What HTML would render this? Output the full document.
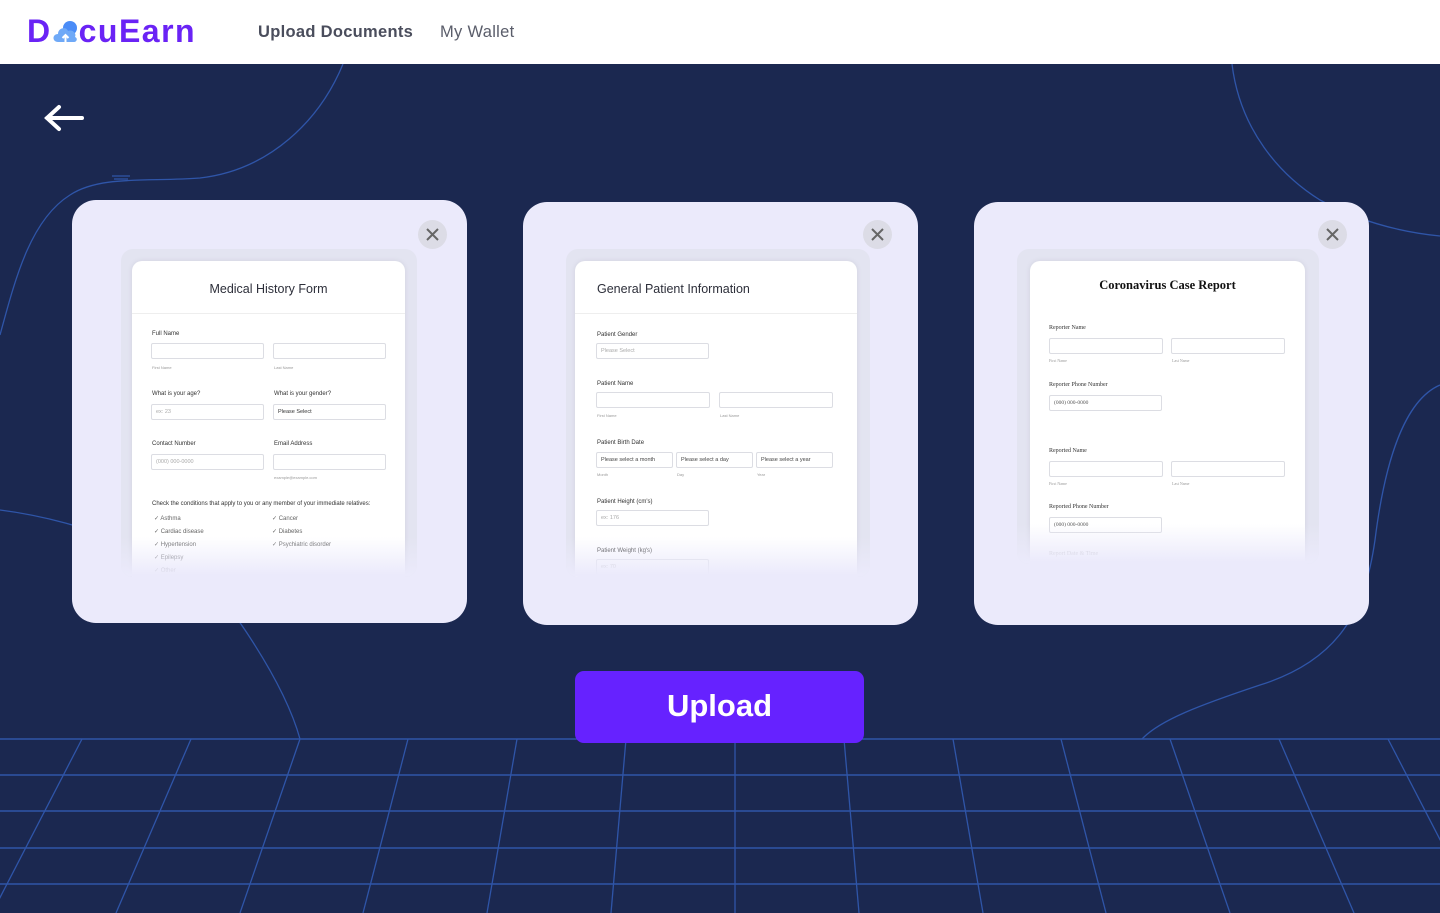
<!DOCTYPE html>
<html><head><meta charset="utf-8">
<style>
*{margin:0;padding:0;box-sizing:border-box}
body{width:1440px;height:913px;overflow:hidden;background:#1b2850;font-family:"Liberation Sans",sans-serif;position:relative}
.nav{position:absolute;left:0;top:0;width:1440px;height:64px;background:#fff}
.logo{position:absolute;left:27px;top:13px;font-size:32px;font-weight:bold;color:#6a23f5;letter-spacing:1.5px}
.n1{position:absolute;left:258px;top:23px;font-size:16.5px;font-weight:bold;color:#4a4d5c;letter-spacing:0.3px}
.n2{position:absolute;left:440px;top:23px;font-size:16.5px;color:#5a5d6a;letter-spacing:0.3px}
svg.bg{position:absolute;left:0;top:0}
.card{position:absolute;width:395px;height:423px;background:#ebeafb;border-radius:24px}
.x{position:absolute;width:29px;height:29px;border-radius:50%;background:#dcdce6;top:20px;right:20px}
.prev{position:absolute;left:49px;top:49px;width:296px;height:328px;background:#e3e4f1;border-radius:12px;overflow:hidden}
.form{position:absolute;left:11px;top:12px;width:273px;height:330px;background:#fff;border-radius:10px;box-shadow:0 0 6px rgba(0,0,0,.08);font-size:6px;color:#333}
.form .h{height:53px;border-bottom:1px solid #eee;font-size:12.5px;color:#2d2f3a;padding-top:21px}
.fade{position:absolute;left:0;bottom:0;width:100%;height:40px;background:linear-gradient(rgba(235,234,251,0),#ebeafb 95%)}
.in{position:absolute;height:16px;border:1px solid #dcdde3;border-radius:2px;color:#aaa;font-size:5.5px;padding:4px 4px}
.sm{position:absolute;font-size:4px;color:#999}
.lb{position:absolute;font-size:6px;color:#333}
.btn{position:absolute;left:575px;top:671px;width:289px;height:72px;background:#6622ff;border-radius:9px;color:#fff;font-weight:bold;font-size:31px;text-align:center;line-height:70px}
.serif{font-family:"Liberation Serif",serif}
</style></head><body>
<svg class="bg" width="1440" height="913" viewBox="0 0 1440 913">
<g fill="none" stroke="#2f55a8" stroke-width="1.3">
<path d="M343 64 C320 120 270 170 200 178 C150 182 100 175 70 195 C30 220 15 280 0 335"/>
<path d="M112 176 L130 176 M114 179 L128 179"/>
<path d="M0 510 C80 520 200 560 245 630 C275 675 292 710 300 739"/>
<path d="M1232 64 C1240 130 1280 175 1320 200 C1360 222 1400 232 1440 236"/>
<path d="M1440 385 C1405 400 1385 460 1375 540 C1365 610 1340 660 1260 685 C1200 705 1160 720 1142 739"/>
</g>
<g stroke="#2f55a8" stroke-width="1.5">
<line x1="0" y1="739" x2="1440" y2="739"/>
<line x1="0" y1="775" x2="1440" y2="775"/>
<line x1="0" y1="811" x2="1440" y2="811"/>
<line x1="0" y1="848" x2="1440" y2="848"/>
<line x1="0" y1="884" x2="1440" y2="884"/>
</g>
<g stroke="#2f55a8" stroke-width="1.3">
<line x1="-27" y1="739" x2="-132" y2="913"/>
<line x1="82" y1="739" x2="-8" y2="913"/>
<line x1="191" y1="739" x2="116" y2="913"/>
<line x1="300" y1="739" x2="240" y2="913"/>
<line x1="408" y1="739" x2="363" y2="913"/>
<line x1="517" y1="739" x2="487" y2="913"/>
<line x1="626" y1="739" x2="611" y2="913"/>
<line x1="735" y1="739" x2="735" y2="913"/>
<line x1="844" y1="739" x2="859" y2="913"/>
<line x1="953" y1="739" x2="983" y2="913"/>
<line x1="1061" y1="739" x2="1106" y2="913"/>
<line x1="1170" y1="739" x2="1230" y2="913"/>
<line x1="1279" y1="739" x2="1354" y2="913"/>
<line x1="1388" y1="739" x2="1478" y2="913"/>
</g>
<g stroke="#fff" stroke-width="4" stroke-linecap="round" fill="none">
<path d="M47 118 H82 M59 107 L47 118 L59 129"/>
</g>
</svg>
<div class="nav">
<div class="logo">D<span style="display:inline-block;width:27px;height:24px;position:relative;vertical-align:-2px"><svg width="27" height="24" viewBox="0 0 27 24" style="position:absolute;left:0;top:0"><circle cx="18" cy="8" r="7" fill="#4a8cf7"/><path d="M6 22 C0 22 0 14 6 14 C6 8 14 6 16 11 C20 9 25 13 23 17 C26 18 25 22 22 22 Z" fill="#6fa9f7"/><path d="M13.5 22 V15 M10.5 18 L13.5 15 L16.5 18" stroke="#fff" stroke-width="2" fill="none"/></svg></span>cuEarn</div>
<div class="n1">Upload Documents</div>
<div class="n2">My Wallet</div>
</div>

<!-- card 1 -->
<div class="card" style="left:72px;top:200px">
<div class="x"><svg width="29" height="29"><path d="M9 9 L20 20 M20 9 L9 20" stroke="#666" stroke-width="2"/></svg></div>
<div class="prev"><div class="form">
<div class="h" style="text-align:center">Medical History Form</div>
<div class="lb" style="left:20px;top:70px">Full Name</div>
<div class="in" style="left:19px;top:82px;width:113px"></div><div class="in" style="left:141px;top:82px;width:113px"></div>
<div class="sm" style="left:20px;top:104px">First Name</div><div class="sm" style="left:142px;top:104px">Last Name</div>
<div class="lb" style="left:20px;top:130px">What is your age?</div><div class="lb" style="left:142px;top:130px">What is your gender?</div>
<div class="in" style="left:19px;top:143px;width:113px">ex: 23</div><div class="in" style="left:141px;top:143px;width:113px;color:#333">Please Select</div>
<div class="lb" style="left:20px;top:180px">Contact Number</div><div class="lb" style="left:142px;top:180px">Email Address</div>
<div class="in" style="left:19px;top:193px;width:113px">(000) 000-0000</div><div class="in" style="left:141px;top:193px;width:113px"></div>
<div class="sm" style="left:142px;top:214px">example@example.com</div>
<div class="lb" style="left:20px;top:240px">Check the conditions that apply to you or any member of your immediate relatives:</div>
<div class="lb" style="left:22px;top:254px;color:#666">✓ Asthma<br><br>✓ Cardiac disease<br><br>✓ Hypertension<br><br>✓ Epilepsy<br><br>✓ Other</div>
<div class="lb" style="left:140px;top:254px;color:#666">✓ Cancer<br><br>✓ Diabetes<br><br>✓ Psychiatric disorder</div>
</div><div class="fade"></div></div>
</div>

<!-- card 2 -->
<div class="card" style="left:523px;top:202px">
<div class="x" style="top:18px;right:26px"><svg width="29" height="29"><path d="M9 9 L20 20 M20 9 L9 20" stroke="#666" stroke-width="2"/></svg></div>
<div class="prev" style="left:43px;top:47px;width:304px"><div class="form" style="left:9px;width:282px">
<div class="h" style="padding-left:22px">General Patient Information</div>
<div class="lb" style="left:22px;top:71px">Patient Gender</div>
<div class="in" style="left:21px;top:82px;width:113px">Please Select</div>
<div class="lb" style="left:22px;top:120px">Patient Name</div>
<div class="in" style="left:21px;top:131px;width:114px"></div><div class="in" style="left:144px;top:131px;width:114px"></div>
<div class="sm" style="left:22px;top:152px">First Name</div><div class="sm" style="left:145px;top:152px">Last Name</div>
<div class="lb" style="left:22px;top:179px">Patient Birth Date</div>
<div class="in" style="left:21px;top:191px;width:77px;color:#444">Please select a month</div><div class="in" style="left:101px;top:191px;width:77px;color:#444">Please select a day</div><div class="in" style="left:181px;top:191px;width:77px;color:#444">Please select a year</div>
<div class="sm" style="left:22px;top:211px">Month</div><div class="sm" style="left:102px;top:211px">Day</div><div class="sm" style="left:182px;top:211px">Year</div>
<div class="lb" style="left:22px;top:238px">Patient Height (cm's)</div>
<div class="in" style="left:21px;top:249px;width:113px">ex: 176</div>
<div class="lb" style="left:22px;top:287px">Patient Weight (kg's)</div>
<div class="in" style="left:21px;top:298px;width:113px">ex: 70</div>
</div><div class="fade"></div></div>
</div>

<!-- card 3 -->
<div class="card" style="left:974px;top:202px">
<div class="x" style="top:18px;right:22px"><svg width="29" height="29"><path d="M9 9 L20 20 M20 9 L9 20" stroke="#666" stroke-width="2"/></svg></div>
<div class="prev serif" style="left:43px;top:47px;width:302px;height:315px"><div class="form" style="left:13px;width:275px">
<div class="h" style="text-align:center;font-weight:bold;font-size:12.5px;color:#111;padding-top:17px;border:none">Coronavirus Case Report</div>
<div class="lb" style="left:19px;top:64px">Reporter Name</div>
<div class="in" style="left:19px;top:77px;width:114px"></div><div class="in" style="left:141px;top:77px;width:114px"></div>
<div class="sm" style="left:19px;top:97px">First Name</div><div class="sm" style="left:142px;top:97px">Last Name</div>
<div class="lb" style="left:19px;top:121px">Reporter Phone Number</div>
<div class="in" style="left:19px;top:134px;width:113px;color:#555">(000) 000-0000</div>
<div class="lb" style="left:19px;top:187px">Reported Name</div>
<div class="in" style="left:19px;top:200px;width:114px"></div><div class="in" style="left:141px;top:200px;width:114px"></div>
<div class="sm" style="left:19px;top:220px">First Name</div><div class="sm" style="left:142px;top:220px">Last Name</div>
<div class="lb" style="left:19px;top:243px">Reported Phone Number</div>
<div class="in" style="left:19px;top:256px;width:113px;color:#555">(000) 000-0000</div>
<div class="lb" style="left:19px;top:290px;color:#aaa">Report Date &amp; Time</div>
</div><div class="fade"></div></div>
</div>

<div class="btn">Upload</div>
</body></html>
